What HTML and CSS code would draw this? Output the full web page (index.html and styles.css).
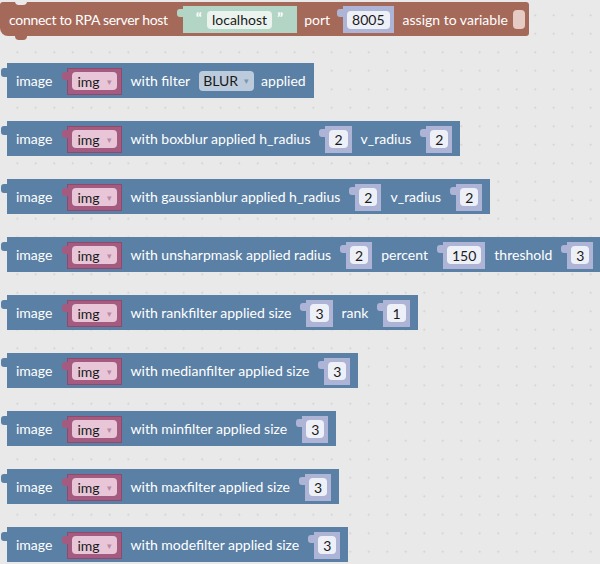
FILE: index.html
```html
<!DOCTYPE html>
<html>
<head>
<meta charset="utf-8">
<link rel="stylesheet" href="styles.css">
</head>
<body>
<div class="ws">
  <div class="blk brown">
    <span class="lbl narrow">connect to RPA server host</span>
    <div class="inp str"><span class="q">“</span><span class="fld">localhost</span><span class="q">”</span></div>
    <span class="lbl port">port</span>
    <div class="inp num"><span class="fld">8005</span></div>
    <span class="lbl tight">assign to variable</span>
    <span class="varfld"></span>
  </div>

  <div class="blk blue first">
    <span class="lbl">image</span>
    <div class="inp var"><span class="fld">img<span class="arr">▾</span></span></div>
    <span class="lbl">with filter</span>
    <span class="dd">BLUR<span class="arr">▾</span></span>
    <span class="lbl">applied</span>
  </div>

  <div class="blk blue">
    <span class="lbl">image</span>
    <div class="inp var"><span class="fld">img<span class="arr">▾</span></span></div>
    <span class="lbl">with boxblur applied h_radius</span>
    <div class="inp num"><span class="fld">2</span></div>
    <span class="lbl">v_radius</span>
    <div class="inp num"><span class="fld">2</span></div>
  </div>

  <div class="blk blue">
    <span class="lbl">image</span>
    <div class="inp var"><span class="fld">img<span class="arr">▾</span></span></div>
    <span class="lbl">with gaussianblur applied h_radius</span>
    <div class="inp num"><span class="fld">2</span></div>
    <span class="lbl">v_radius</span>
    <div class="inp num"><span class="fld">2</span></div>
  </div>

  <div class="blk blue">
    <span class="lbl">image</span>
    <div class="inp var"><span class="fld">img<span class="arr">▾</span></span></div>
    <span class="lbl">with unsharpmask applied radius</span>
    <div class="inp num"><span class="fld">2</span></div>
    <span class="lbl">percent</span>
    <div class="inp num"><span class="fld">150</span></div>
    <span class="lbl">threshold</span>
    <div class="inp num"><span class="fld">3</span></div>
  </div>

  <div class="blk blue">
    <span class="lbl">image</span>
    <div class="inp var"><span class="fld">img<span class="arr">▾</span></span></div>
    <span class="lbl">with rankfilter applied size</span>
    <div class="inp num"><span class="fld">3</span></div>
    <span class="lbl">rank</span>
    <div class="inp num"><span class="fld">1</span></div>
  </div>

  <div class="blk blue">
    <span class="lbl">image</span>
    <div class="inp var"><span class="fld">img<span class="arr">▾</span></span></div>
    <span class="lbl">with medianfilter applied size</span>
    <div class="inp num"><span class="fld">3</span></div>
  </div>

  <div class="blk blue">
    <span class="lbl">image</span>
    <div class="inp var"><span class="fld">img<span class="arr">▾</span></span></div>
    <span class="lbl">with minfilter applied size</span>
    <div class="inp num"><span class="fld">3</span></div>
  </div>

  <div class="blk blue">
    <span class="lbl">image</span>
    <div class="inp var"><span class="fld">img<span class="arr">▾</span></span></div>
    <span class="lbl">with maxfilter applied size</span>
    <div class="inp num"><span class="fld">3</span></div>
  </div>

  <div class="blk blue">
    <span class="lbl">image</span>
    <div class="inp var"><span class="fld">img<span class="arr">▾</span></span></div>
    <span class="lbl">with modefilter applied size</span>
    <div class="inp num"><span class="fld">3</span></div>
  </div>
</div>
</body>
</html>
```
FILE: styles.css
```css
html, body {
  margin: 0;
  padding: 0;
}
body {
  width: 600px;
  height: 564px;
  overflow: hidden;
  background-color: #e9e9e9;
  background-image: radial-gradient(circle, #cdcdcd 0.8px, rgba(0,0,0,0) 1.1px);
  background-size: 18.5px 18.5px;
  background-position: 8px 6px;
  font-family: Lato, "Liberation Sans", sans-serif;
  font-size: 14px;
}
.ws {
  display: flex;
  flex-direction: column;
  align-items: flex-start;
  gap: 23px;
  padding-top: 2px;
}
.blk {
  position: relative;
  display: flex;
  align-items: center;
  height: 35px;
  box-sizing: border-box;
  padding: 0 10px 0 9px;
  color: #fff;
  white-space: nowrap;
}
.lbl {
  margin-right: 9px;
}
.lbl:last-child {
  margin-right: 0;
}
.lbl.narrow {
  letter-spacing: -0.3px;
}
.lbl.port {
  margin-right: 7px;
}
.lbl.tight {
  margin-right: 5px;
}
.brown {
  background: #a5695a;
  border-radius: 3px 3px 3px 8px;
  height: 34px;
  padding-right: 4px;
}
.brown::before {
  content: "";
  position: absolute;
  left: 15px;
  top: -1px;
  width: 12px;
  height: 4px;
  background: #e9e9e9;
  border-radius: 0 0 4px 4px;
}
.brown::after {
  content: "";
  position: absolute;
  left: 15px;
  bottom: -4px;
  width: 12px;
  height: 4px;
  background: #a5695a;
  border-radius: 0 0 4px 4px;
}
.blue {
  background: #5b80a5;
  margin-left: 7px;
  padding-right: 8px;
}
.blue.first {
  margin-top: 4px;
}
.blue::before {
  content: "";
  position: absolute;
  left: -6px;
  top: 5px;
  width: 6px;
  height: 9px;
  background: #5b80a5;
  border-radius: 3px 0 0 3px;
}
.inp {
  position: relative;
  display: flex;
  align-items: center;
  height: 27px;
  box-sizing: border-box;
  margin-left: 6px;
  margin-right: 9px;
  padding: 0 5px;
  margin-top: 1px;
}
.inp::before {
  content: "";
  position: absolute;
  left: -6px;
  top: 3px;
  width: 6px;
  height: 8px;
  border-radius: 3px 0 0 3px;
  background: inherit;
}
.inp:last-child {
  margin-right: 0;
}
.fld {
  display: flex;
  align-items: center;
  height: 18px;
  padding: 0 4px;
  border-radius: 4px;
  color: #1a1a1a;
}
.str {
  background: #b2d5c6;
  padding: 0 9px 0 8px;
  margin-right: 7px;
}
.str .fld {
  background: #ebf3ef;
  padding: 0 5px;
}
.q {
  color: #fff;
  font-size: 16px;
  font-weight: bold;
  margin: 0 5px;
  position: relative;
  top: -2px;
}
.num {
  background: #adb4d6;
  padding: 0 4px;
}
.num .fld {
  background: #eef0f8;
  padding: 0 5px;
}
.var {
  background: #a55b80;
  border: 1px solid #8e4a6c;
  padding: 0 4px;
}
.var .fld {
  background: #e8c6d8;
  padding: 0 5px 0 5px;
}
.arr {
  font-size: 9px;
  color: #b98aa3;
  margin-left: 7px;
}
.dd {
  display: flex;
  align-items: center;
  height: 20px;
  padding: 0 5px 0 4px;
  border-radius: 4px;
  background: #bccbdc;
  color: #1a1a1a;
  margin-right: 7px;
}
.dd .arr {
  color: #7f95ad;
  margin-left: 6px;
}
.varfld {
  display: block;
  width: 12px;
  height: 19px;
  border-radius: 4px;
  background: #e5cbc4;
}
```
